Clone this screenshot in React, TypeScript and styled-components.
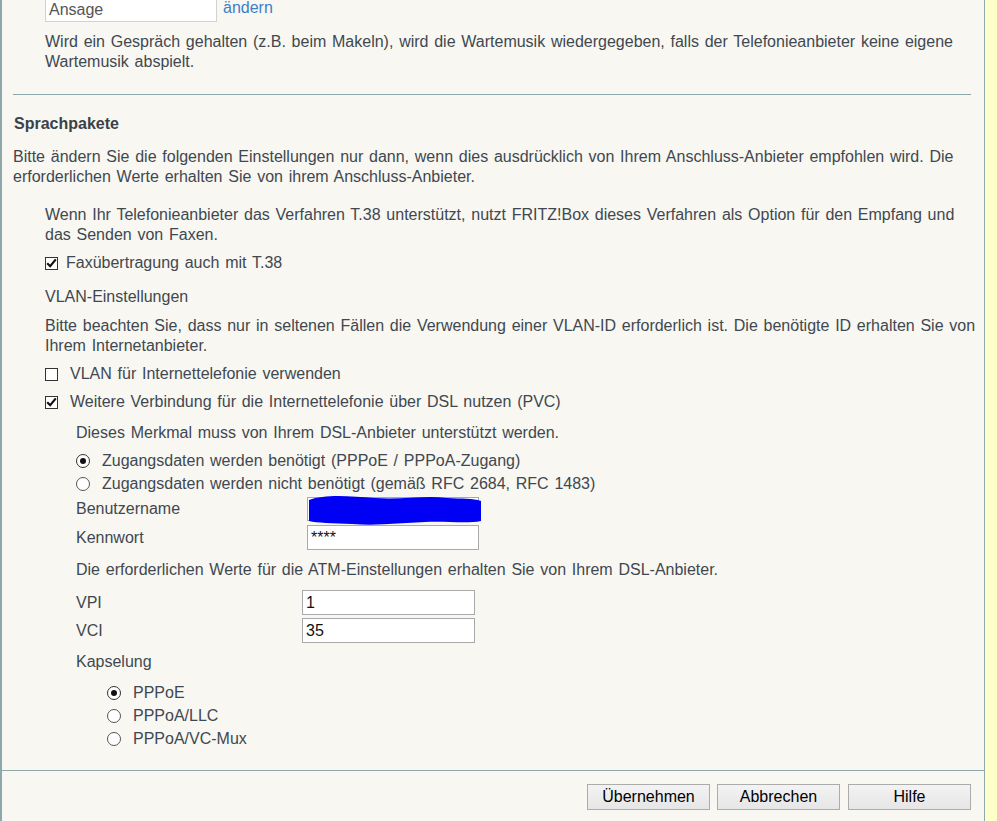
import React from "react";
import styled, { createGlobalStyle } from "styled-components";

const GlobalStyle = createGlobalStyle`
  html, body {
    margin: 0;
    padding: 0;
    overflow: hidden;
  }
  body {
    font-family: "Liberation Sans", Arial, sans-serif;
    font-size: 16px;
    word-spacing: 1.3px;
    color: #3f4850;
  }
`;

const Frame = styled.div`
  display: flex;
  height: 821px;
  width: 997px;
  overflow: hidden;
`;

const Main = styled.div`
  width: 982px;
  border-left: 2px solid #8ea7aa;
  border-right: 1px solid #8ea7aa;
  background: #f8f7f2;
  display: flex;
  flex-direction: column;
`;

const Sidebar = styled.div`
  flex: 1;
  background: #ffffc9;
`;

const Content = styled.div`
  flex: 1;
  padding: 0 5px 0 11px;
  overflow: hidden;
  line-height: 20px;
`;

const Indent = styled.div<{ $level: number; $top?: number }>`
  padding-left: ${(p) => p.$level}px;
  margin-top: ${(p) => p.$top ?? 0}px;
`;

const Para = styled.p<{ $top?: number }>`
  margin: ${(p) => p.$top ?? 0}px 0 0 0;
  line-height: 20px;
`;

const Heading = styled.h3<{ $top?: number }>`
  margin: ${(p) => p.$top ?? 0}px 0 0 1px;
  font-size: 16px;
  font-weight: bold;
  line-height: 20px;
  color: #3a4249;
`;

const Rule = styled.hr`
  margin: 22px 8px 0 0;
  border: none;
  border-top: 1px solid #8ea7aa;
  height: 0;
`;

const TopRow = styled.div`
  display: flex;
  align-items: flex-start;
  margin-top: -3px;
  gap: 6px;
`;

const TextInput = styled.div<{ $width: number; $height: number; $muted?: boolean }>`
  position: relative;
  box-sizing: border-box;
  width: ${(p) => p.$width}px;
  height: ${(p) => p.$height}px;
  background: #fff;
  border: 1px solid ${(p) => (p.$muted ? "#d2d2d2" : "#a9a9a9")};
  padding: 0 3px;
  display: flex;
  align-items: center;
  color: ${(p) => (p.$muted ? "#555" : "#111")};
  font-size: 16px;
`;

const Link = styled.a`
  color: #3d80c6;
  text-decoration: none;
  line-height: 20px;
  margin-top: 1px;
`;

const OptionRow = styled.label<{ $top?: number; $gap: number }>`
  display: flex;
  align-items: center;
  height: 20px;
  gap: ${(p) => p.$gap}px;
  margin-top: ${(p) => p.$top ?? 0}px;
`;

const Box = styled.span`
  box-sizing: border-box;
  width: 13px;
  height: 13px;
  border: 1px solid #333;
  background: #fff;
  display: flex;
  align-items: center;
  justify-content: center;
  flex: none;
`;

const Circle = styled.span<{ $on?: boolean }>`
  box-sizing: border-box;
  width: 14px;
  height: 14px;
  border-radius: 50%;
  border: 1px solid ${(p) => (p.$on ? "#333" : "#555")};
  background: #fff;
  display: flex;
  align-items: center;
  justify-content: center;
  flex: none;

  &::after {
    content: "";
    display: ${(p) => (p.$on ? "block" : "none")};
    width: 6px;
    height: 6px;
    border-radius: 50%;
    background: #111;
  }
`;

const FieldRow = styled.div<{ $top?: number; $label: number }>`
  display: grid;
  grid-template-columns: ${(p) => p.$label}px auto;
  align-items: center;
  margin-top: ${(p) => p.$top ?? 0}px;
`;

const Scribble = styled.svg`
  position: absolute;
  left: -1px;
  top: -4px;
  width: 174px;
  height: 32px;
  pointer-events: none;
`;

const Footer = styled.div`
  box-sizing: border-box;
  height: 51px;
  border-top: 1px solid #8ea7aa;
  display: flex;
  justify-content: flex-end;
  align-items: flex-start;
  padding: 13px 13px 0 0;
  gap: 7px;
`;

const Button = styled.button`
  box-sizing: border-box;
  width: 123px;
  height: 26px;
  font-family: "Liberation Sans", Arial, sans-serif;
  font-size: 16px;
  color: #000;
  background: linear-gradient(to bottom, #f3f3f3 0%, #e6e6e6 100%);
  border: 1px solid #acacac;
  border-radius: 0;
  padding: 0;
`;

const Check: React.FC<{ on?: boolean }> = ({ on }) => (
  <Box>
    {on && (
      <svg width="11" height="10" viewBox="0 0 11 10">
        <path d="M1.2 5.2 L4.2 8.2 L9.8 1.4" fill="none" stroke="#111" strokeWidth="2.2" />
      </svg>
    )}
  </Box>
);

export default function App() {
  return (
    <>
      <GlobalStyle />
      <Frame>
        <Main>
          <Content>
            <Indent $level={32}>
              <TopRow>
                <TextInput $width={172} $height={25} $muted>
                  Ansage
                </TextInput>
                <Link href="#">ändern</Link>
              </TopRow>
              <Para $top={10}>
                Wird ein Gespräch gehalten (z.B. beim Makeln), wird die Wartemusik wiedergegeben, falls der
                Telefonieanbieter keine eigene Wartemusik abspielt.
              </Para>
            </Indent>

            <Rule />

            <Heading $top={19}>Sprachpakete</Heading>
            <Para $top={13}>
              Bitte ändern Sie die folgenden Einstellungen nur dann, wenn dies ausdrücklich von Ihrem
              Anschluss-Anbieter empfohlen wird. Die erforderlichen Werte erhalten Sie von ihrem
              Anschluss-Anbieter.
            </Para>

            <Indent $level={32} $top={18}>
              <Para>
                Wenn Ihr Telefonieanbieter das Verfahren T.38 unterstützt, nutzt FRITZ!Box dieses Verfahren
                als Option für den Empfang und das Senden von Faxen.
              </Para>
              <OptionRow $top={8} $gap={8}>
                <Check on />
                Faxübertragung auch mit T.38
              </OptionRow>

              <Para $top={14}>VLAN-Einstellungen</Para>
              <Para $top={9}>
                Bitte beachten Sie, dass nur in seltenen Fällen die Verwendung einer VLAN-ID erforderlich ist.
                Die benötigte ID erhalten Sie von Ihrem Internetanbieter.
              </Para>
              <OptionRow $top={8} $gap={12}>
                <Check />
                VLAN für Internettelefonie verwenden
              </OptionRow>
              <OptionRow $top={8} $gap={12}>
                <Check on />
                Weitere Verbindung für die Internettelefonie über DSL nutzen (PVC)
              </OptionRow>

              <Indent $level={31} $top={11}>
                <Para>Dieses Merkmal muss von Ihrem DSL-Anbieter unterstützt werden.</Para>
                <OptionRow $top={8} $gap={12}>
                  <Circle $on />
                  Zugangsdaten werden benötigt (PPPoE / PPPoA-Zugang)
                </OptionRow>
                <OptionRow $top={3} $gap={12}>
                  <Circle />
                  Zugangsdaten werden nicht benötigt (gemäß RFC 2684, RFC 1483)
                </OptionRow>

                <FieldRow $top={3} $label={231}>
                  <span>Benutzername</span>
                  <TextInput $width={172} $height={24}>
                    <Scribble viewBox="0 0 174 32">
                      <path
                        d="M2 6 C18 0, 42 2, 68 4 C95 6, 118 1, 140 4 C155 5, 166 4, 174 7 L174 27 C160 30, 140 27, 118 28 C94 29, 70 32, 45 30 C25 29, 10 29, 2 27 Z"
                        fill="#0000f5"
                      />
                    </Scribble>
                  </TextInput>
                </FieldRow>
                <FieldRow $top={4} $label={231}>
                  <span>Kennwort</span>
                  <TextInput $width={172} $height={25}>
                    ****
                  </TextInput>
                </FieldRow>

                <Para $top={10}>Die erforderlichen Werte für die ATM-Einstellungen erhalten Sie von Ihrem DSL-Anbieter.</Para>

                <FieldRow $top={10} $label={226}>
                  <span>VPI</span>
                  <TextInput $width={173} $height={25}>
                    1
                  </TextInput>
                </FieldRow>
                <FieldRow $top={3} $label={226}>
                  <span>VCI</span>
                  <TextInput $width={173} $height={25}>
                    35
                  </TextInput>
                </FieldRow>

                <Para $top={9}>Kapselung</Para>
                <Indent $level={31} $top={11}>
                  <OptionRow $gap={12}>
                    <Circle $on />
                    PPPoE
                  </OptionRow>
                  <OptionRow $top={3} $gap={12}>
                    <Circle />
                    PPPoA/LLC
                  </OptionRow>
                  <OptionRow $top={3} $gap={12}>
                    <Circle />
                    PPPoA/VC-Mux
                  </OptionRow>
                </Indent>
              </Indent>
            </Indent>
          </Content>
          <Footer>
            <Button>Übernehmen</Button>
            <Button>Abbrechen</Button>
            <Button style={{ marginLeft: 1 }}>Hilfe</Button>
          </Footer>
        </Main>
        <Sidebar />
      </Frame>
    </>
  );
}
